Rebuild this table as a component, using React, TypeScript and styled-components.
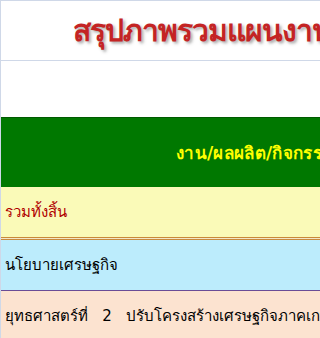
import styled, { createGlobalStyle } from "styled-components";

const GlobalStyle = createGlobalStyle`
  html, body {
    margin: 0;
    padding: 0;
    background: #ffffff;
    overflow: hidden;
  }
  body {
    font-family: Tahoma, "DejaVu Sans", "Noto Sans", sans-serif;
  }
`;

export default function App() {
  return (
    <>
      <GlobalStyle />
      <Page>
        <TitleBar>
          <Title>สรุปภาพรวมแผนงาน/โครงการ ประจำปีงบประมาณ</Title>
        </TitleBar>
        <Spacer />
        <Table>
          <HeaderRow>
            <HeaderText>งาน/ผลผลิต/กิจกรรม/โครงการ</HeaderText>
          </HeaderRow>
          <Row $bg="#fafab8">
            <RowText $color="#b00000">รวมทั้งสิ้น</RowText>
          </Row>
          <DoubleRule />
          <Row $bg="#bcecfc">
            <RowText>นโยบายเศรษฐกิจ</RowText>
          </Row>
          <Rule />
          <Row $bg="#fce3d0">
            <RowText>
              ยุทธศาสตร์ที่&nbsp;&nbsp;&nbsp;2&nbsp;&nbsp;&nbsp;ปรับโครงสร้างเศรษฐกิจภาคเกษตร
            </RowText>
          </Row>
        </Table>
      </Page>
    </>
  );
}

const Page = styled.div`
  width: 1000px;
  height: 338px;
  border-left: 1px solid #cfd8e8;
  border-top: 1px solid #cfd8e8;
  box-sizing: border-box;
`;

const TitleBar = styled.div`
  height: 59px;
  border-bottom: 1px solid #cfd8e8;
  display: flex;
  align-items: center;
  padding-left: 72px;
`;

const Title = styled.h1`
  margin: 0;
  font-family: "DejaVu Sans", "Noto Sans", sans-serif;
  font-size: 30px;
  font-weight: bold;
  color: #c42424;
  text-shadow: 2px 2px 3px rgba(90, 90, 90, 0.5);
  white-space: nowrap;
  letter-spacing: -1px;
`;

const Spacer = styled.div`
  height: 56px;
`;

const Table = styled.div`
  display: flex;
  flex-direction: column;
`;

const HeaderRow = styled.div`
  height: 70px;
  background: #007800;
  border-top: 1px solid #005a00;
  box-sizing: border-box;
  display: flex;
  align-items: center;
  padding-left: 175px;
`;

const HeaderText = styled.span`
  color: #ffff00;
  font-size: 17px;
  font-weight: bold;
  white-space: nowrap;
  letter-spacing: 0.3px;
`;

const Row = styled.div<{ $bg: string }>`
  height: 50px;
  background: ${(p) => p.$bg};
  display: flex;
  align-items: center;
  padding-left: 4px;
`;

const RowText = styled.span<{ $color?: string }>`
  color: ${(p) => p.$color ?? "#000000"};
  font-size: 15px;
  white-space: nowrap;
`;

const DoubleRule = styled.div`
  height: 1px;
  border-top: 1px solid #c88a3a;
  border-bottom: 1px solid #c88a3a;
  background: #f2e6c8;
`;

const Rule = styled.div`
  height: 1px;
  background: #6a4c96;
`;
